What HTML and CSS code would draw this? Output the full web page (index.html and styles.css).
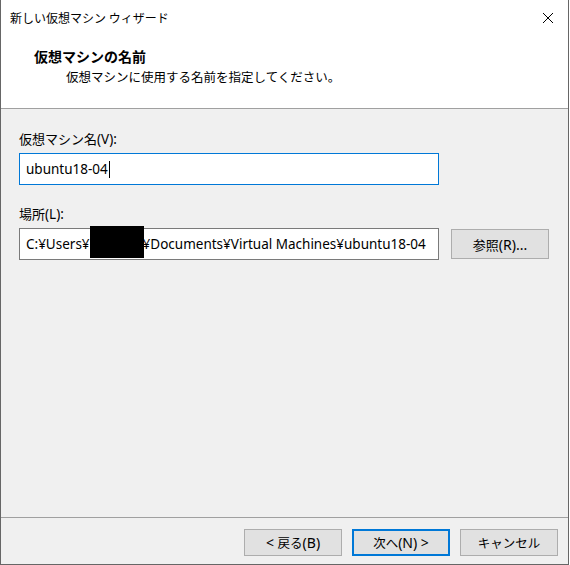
FILE: index.html
```html
<!DOCTYPE html>
<html lang="ja">
<head>
<meta charset="utf-8">
<title>新しい仮想マシン ウィザード</title>
<link rel="stylesheet" href="styles.css">
</head>
<body>
<div class="window">
  <div class="top">
    <div class="titlebar">
      <span class="title">新しい仮想マシン ウィザード</span>
      <span class="close">
        <svg width="12" height="12" viewBox="0 0 12 12"><path d="M1 1 L11 11 M11 1 L1 11" stroke="#000" stroke-width="1" fill="none"/></svg>
      </span>
    </div>
    <div class="header">
      <div class="heading">仮想マシンの名前</div>
      <div class="subtitle">仮想マシンに使用する名前を指定してください。</div>
    </div>
  </div>
  <div class="content">
    <div class="label">仮想マシン名<span class="lat">(V):</span></div>
    <div class="field focused"><span class="value">ubuntu18-04</span><span class="caret"></span></div>
    <div class="label second">場所<span class="lat">(L):</span></div>
    <div class="row">
      <div class="field path">
        <span class="value">C:¥Users¥<span class="user">user</span>¥Documents¥Virtual Machines¥ubuntu18-04</span>
        <span class="redact"></span>
      </div>
      <button class="btn browse">参照<span class="lat">(R)...</span></button>
    </div>
  </div>
  <div class="footer">
    <button class="btn"><span class="lat">&lt; </span>戻る<span class="lat">(B)</span></button>
    <button class="btn default">次へ<span class="lat">(N) &gt;</span></button>
    <button class="btn">キャンセル</button>
  </div>
</div>
</body>
</html>
```

FILE: styles.css
```css
html, body {
  margin: 0;
  padding: 0;
  background: #ffffff;
}
body {
  font-family: "Noto Sans", "Noto Sans CJK JP", sans-serif;
  font-size: 12px;
  color: #000;
}
.window {
  box-sizing: border-box;
  width: 569px;
  height: 565px;
  border-left: 1px solid #666666;
  border-right: 1px solid #666666;
  border-bottom: 1px solid #666666;
  background: #f0f0f0;
  display: flex;
  flex-direction: column;
}
.top {
  background: #ffffff;
  height: 108px;
  border-bottom: 1px solid #a0a0a0;
}
.titlebar {
  height: 36px;
  display: flex;
  align-items: center;
  justify-content: space-between;
  padding-left: 9px;
}
.title {
  font-family: "Noto Sans CJK JP", sans-serif;
  font-size: 12px;
  line-height: 16px;
}
.close {
  width: 40px;
  height: 36px;
  display: flex;
  align-items: center;
  justify-content: center;
}
.close svg { display: block; }
.header {
  padding-top: 12px;
  padding-left: 33px;
}
.heading {
  font-family: "Noto Sans CJK JP", sans-serif;
  font-weight: bold;
  font-size: 14px;
  line-height: 16px;
}
.subtitle {
  font-family: "Noto Sans CJK JP", sans-serif;
  font-size: 12.5px;
  margin-top: 5px;
  padding-left: 32px;
  line-height: 16px;
}
.content {
  flex: 1;
  padding: 22px 0 0 18px;
}
.label {
  font-size: 13px;
  line-height: 16px;
  margin-bottom: 6px;
}
.lat {
  font-family: "Noto Sans", sans-serif;
  font-size: 13.5px;
}
.label.second {
  margin-top: 21px;
}
.field {
  box-sizing: border-box;
  width: 420px;
  height: 32px;
  background: #ffffff;
  border: 1px solid #7a7a7a;
  display: flex;
  align-items: center;
  padding-left: 6px;
  position: relative;
  white-space: nowrap;
}
.value {
  font-size: 13.5px;
}
.field.focused {
  border-color: #0078d7;
}
.caret {
  display: inline-block;
  width: 1px;
  height: 17px;
  background: #000;
  margin-left: 1px;
}
.row {
  display: flex;
  align-items: center;
  gap: 12px;
}
.user {
  display: inline-block;
  width: 53px;
  overflow: hidden;
  vertical-align: bottom;
}
.redact {
  position: absolute;
  left: 70px;
  top: -3px;
  width: 54px;
  height: 32px;
  background: #000;
}
.btn {
  box-sizing: border-box;
  width: 98px;
  height: 27px;
  background: #e1e1e1;
  border: 1px solid #adadad;
  font-family: "Noto Sans", "Noto Sans CJK JP", sans-serif;
  font-size: 12.5px;
  color: #000;
  padding: 0;
  margin: 0;
}
.btn .lat {
  font-size: 14px;
}
.btn.browse {
  height: 30px;
  font-size: 13px;
}
.btn.default {
  border: 2px solid #0078d7;
}
.footer {
  height: 47px;
  border-top: 1px solid #a0a0a0;
  box-sizing: border-box;
  display: flex;
  justify-content: flex-end;
  align-items: flex-start;
  gap: 10px;
  padding: 11px 10px 0 0;
}
```
